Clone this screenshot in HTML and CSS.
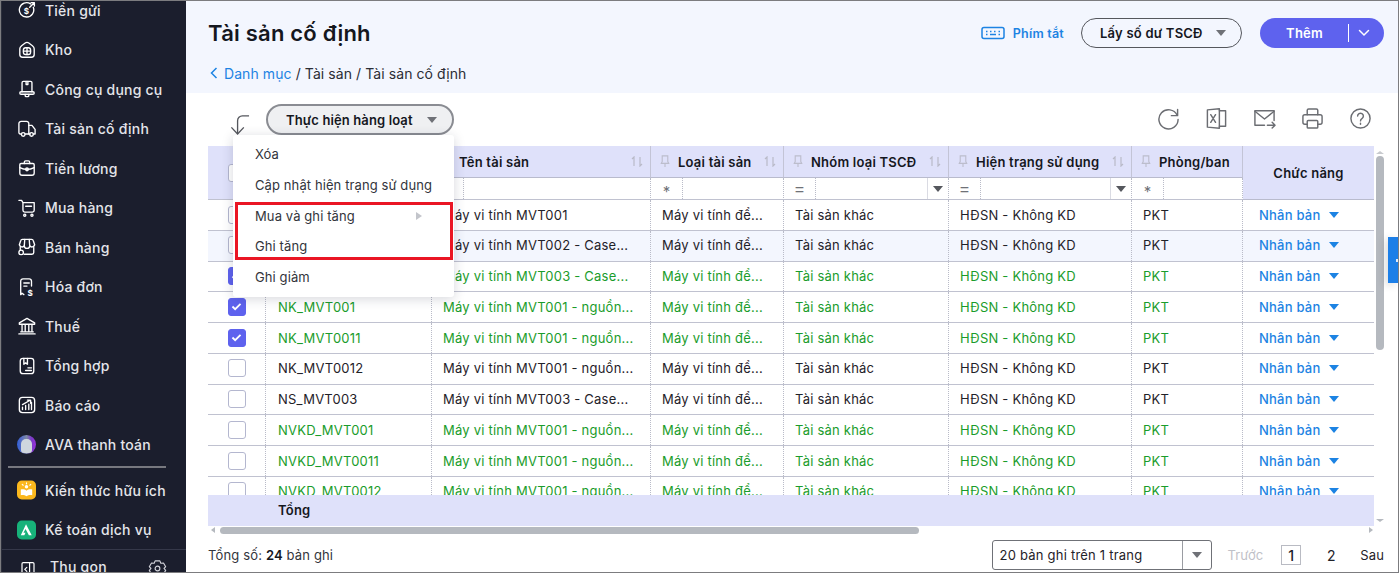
FILE: index.html
```html
<!DOCTYPE html>
<html lang="vi">
<head>
<meta charset="utf-8">
<title>Tài sản cố định</title>
<link rel="stylesheet" href="styles.css">
</head>
<body>
<div class="frame">
<aside class="sidebar">
  <nav class="nav">
    <a class="nav-item"><svg class="ni" viewBox="0 0 20 20"><path d="M14 3.200A8 8 0 1 0 17 7"/><path d="M13 7l5-5M14.500 1.800h3.700v3.700"/><text x="6.500" y="14" class="ni-t">$</text></svg>Tiền gửi</a>
    <a class="nav-item"><svg class="ni" viewBox="0 0 20 20"><path d="M2 8.500C2 7 3 6 4 5.200L8 2.300a3.400 3.400 0 0 1 4 0l4 2.900C17 6 18 7 18 8.500V15a3 3 0 0 1-3 3H5a3 3 0 0 1-3-3z"/><rect x="6" y="7.500" width="8" height="7.500" rx="2.500"/><path d="M6 11.200h8M10 7.500V15"/></svg>Kho</a>
    <a class="nav-item"><svg class="ni" viewBox="0 0 20 20"><path d="M4.500 13V3a1.500 1.500 0 0 1 1.500-1.500h8A1.500 1.500 0 0 1 15.500 3v10"/><rect x="2" y="13" width="16" height="2.800" rx="1.400"/><path d="M8 16v1.500a1 1 0 0 0 1 1h2a1 1 0 0 0 1-1V16M9 1.500v3.500h2V1.500"/></svg>Công cụ dụng cụ</a>
    <a class="nav-item"><svg class="ni" viewBox="0 0 20 20"><path d="M3.500 15.500H2.500A1.500 1.500 0 0 1 1 14V4a2.500 2.500 0 0 1 2.500-2.500h6A2.500 2.500 0 0 1 12 4v11.500H8"/><path d="M12 6h3.500l3.500 4.500v5h-2M12 15.500h1.500"/><circle cx="5.800" cy="16" r="2"/><circle cx="15" cy="16" r="2"/></svg>Tài sản cố định</a>
    <a class="nav-item"><svg class="ni" viewBox="0 0 20 20"><path d="M3.500 5h13A1.500 1.500 0 0 1 18 6.500v9a2.500 2.500 0 0 1-2.500 2.500h-11A2.500 2.500 0 0 1 2 15.500v-9A1.500 1.500 0 0 1 3.500 5z"/><path d="M7 5V3.500A1.500 1.500 0 0 1 8.500 2h3A1.500 1.500 0 0 1 13 3.500V5M2 9.500c5 2.500 11 2.500 16 0"/><circle cx="10" cy="11.500" r="1.500"/></svg>Tiền lương</a>
    <a class="nav-item"><svg class="ni" viewBox="0 0 20 20"><path d="M1 1.500h3l1.500 2.500h12.500v8.500a2 2 0 0 1-2 2H7.500a2 2 0 0 1-2-2V4"/><path d="M8.500 8h6.500"/><circle cx="7.500" cy="18" r="1.200"/><circle cx="15.500" cy="18" r="1.200"/></svg>Mua hàng</a>
    <a class="nav-item"><svg class="ni" viewBox="0 0 20 20"><path d="M5 1.500h10a2 2 0 0 1 2 1.500l1.500 4.500a3 3 0 0 1-5.500 1 3 3 0 0 1-6 0 3 3 0 0 1-5.500-1L3 3a2 2 0 0 1 2-1.500z"/><path d="M7.500 1.500 7 8.500M12.500 1.500 13 8.500M2.500 10.500v2.500M17.500 10.500V16a2 2 0 0 1-2 2H7"/><circle cx="3.500" cy="16" r="2.500"/></svg>Bán hàng</a>
    <a class="nav-item"><svg class="ni" viewBox="0 0 20 20"><path d="M6.500 18.500 4.500 17l-1.500 1.500V3.500a2.500 2.500 0 0 1 2.500-2.500h7a2.500 2.500 0 0 1 2.500 2.500V9"/><path d="M6.500 5.500h6M6.500 9h3.500"/><text x="10.500" y="19.500" class="ni-t">$</text></svg>Hóa đơn</a>
    <a class="nav-item"><svg class="ni" viewBox="0 0 20 20"><path d="M1.500 6.500 10 1.500l8.500 5v1.500h-17zM3 16.500h14M1 18.800h18M4.500 8v8.500M8 8v8.500M12 8v8.500M15.500 8v8.500"/></svg>Thuế</a>
    <a class="nav-item"><svg class="ni" viewBox="0 0 20 20"><rect x="2.500" y="1.500" width="15" height="17" rx="3"/><path d="M6.500 1.500V8l2-1.500 2 1.500V1.500M11 12h4M8.500 15h6.500"/></svg>Tổng hợp</a>
    <a class="nav-item"><svg class="ni" viewBox="0 0 20 20"><rect x="1.500" y="1.500" width="17" height="17" rx="3.500"/><path d="M5 15v-2.500M8.500 15v-4.500M12 15V9M15 15V7M5 9.500l8-4.500M10.500 4.500H14V8"/></svg>Báo cáo</a>
    <a class="nav-item"><span class="ava"><span class="ava-f"></span></span>AVA thanh toán</a>
    <div class="nav-sep"></div>
    <a class="nav-item"><svg class="ni-app" viewBox="0 0 20 20"><rect width="20" height="20" rx="5" class="app-y"/><path class="white" d="M4 9.500c2-.5 4.500 0 6 1.300 1.500-1.300 4-1.800 6-1.300v6c-2-.5-4.500 0-6 1-1.500-1-4-1.500-6-1z"/><circle class="white" cx="10" cy="6.500" r="1.800"/><path class="spark" d="M10 2.500v1M5.500 4l1 1M14.500 4l-1 1"/></svg>Kiến thức hữu ích</a>
    <a class="nav-item"><svg class="ni-app" viewBox="0 0 20 20"><rect width="20" height="20" rx="5" class="app-g"/><path class="white" d="M9.500 4 15.500 15.500h-3L9 9l-2.200 4 2.200 0-1.300 2.500H4z"/></svg>Kế toán dịch vụ</a>
  </nav>
  <div class="side-foot">
    <svg class="ni ni-col" viewBox="0 0 20 20"><rect x="2.500" y="2" width="15" height="17" rx="1.500"/><path d="M12 2v17M8.500 8 6 10.500 8.500 13"/></svg>
    <span class="collapse">Thu gọn</span>
    <svg class="ni ni-gear" viewBox="0 0 20 20"><path d="M7.500 2h5l1 2.500 2.800-.3 2.300 3.900L16.900 10l1.700 2-2.300 3.900-2.800-.3-1 2.400h-5l-1-2.400-2.800.3L1.400 12l1.700-2-1.700-1.900 2.300-3.900 2.800.3z"/><circle cx="10" cy="10" r="2.500"/></svg>
  </div>
</aside>
<main class="main">
  <header class="top">
    <div class="top-row">
      <h1 class="title">Tài sản cố định</h1>
      <div class="top-actions">
        <a class="shortcut"><svg class="kbd" viewBox="0 0 24 14"><rect x="1" y="1.500" width="22" height="11" rx="2"/><path d="M5 5.500h1.500M9 5.500h1.500M13 5.500h1.500M17.500 5.500H19M5 8.500h1.500M9 8.500h6M17.500 8.500H19"/></svg>Phím tắt</a>
        <button class="btn-outline">Lấy số dư TSCĐ<span class="caret gray"></span></button>
        <button class="btn-primary"><span class="bp-label">Thêm</span><span class="bp-split"><svg class="chev" viewBox="0 0 12 8"><path d="M1.500 1.500 6 6l4.500-4.500"/></svg></span></button>
      </div>
    </div>
    <div class="crumbs"><svg class="crumb-chev" viewBox="0 0 8 12"><path d="M6.500 1 1.500 6l5 5"/></svg><a class="crumb-link">Danh mục</a> / Tài sản / Tài sản cố định</div>
  </header>
  <section class="content">
    <div class="toolbar">
      <svg class="bulk-arrow" viewBox="0 0 22 22"><path d="M21 1.500h-7a5 5 0 0 0-5 5V20"/><path d="M2.500 13.500 9 20.500l6.500-7"/></svg>
      <button class="btn-bulk">Thực hiện hàng loạt<span class="caret gray"></span></button>
      <div class="tools">
        <svg class="tool" viewBox="0 0 24 24"><path d="M21 8.500A10 10 0 1 0 22 13"/><path d="M21.500 2.500V9H15"/></svg>
        <svg class="tool" viewBox="0 0 24 24"><path d="M2.500 3 15 1.800v20.400L2.500 21z"/><path d="M15 4h6.500v16H15M6 8l5 8M11 8l-5 8"/></svg>
        <svg class="tool" viewBox="0 0 24 24"><path d="M12 19H2V4h20v10"/><path d="M2 4.500l10 8 10-8M15 19h8M20 16l3 3-3 3"/></svg>
        <svg class="tool" viewBox="0 0 24 24"><path d="M6.500 8V3.500a1.500 1.500 0 0 1 1.500-1.500h8a1.500 1.500 0 0 1 1.500 1.500V8"/><path d="M6.500 18H4a2 2 0 0 1-2-2v-6a2 2 0 0 1 2-2h16a2 2 0 0 1 2 2v6a2 2 0 0 1-2 2h-2.500"/><rect x="6.500" y="14" width="11" height="8" rx="1"/></svg>
        <svg class="tool" viewBox="0 0 24 24"><circle cx="12" cy="12" r="10"/><path d="M9 9.500a3 3 0 1 1 4.500 2.600c-1 .6-1.500 1.200-1.500 2.400M12 17v1"/></svg>
      </div>
    </div>
    <div class="grid-wrap">
      <div class="grid">
        <div class="head">
          <div class="h-chk"><span class="cb"></span></div>
          <div class="h-cell"></div>
          <div class="h-cell"><svg class="pin" viewBox="0 0 10 14"><path d="M2 1h6v6l1 2H1l1-2zM5 9v4"/></svg><span class="h-txt">Tên tài sản</span><svg class="sort" viewBox="0 0 12 11"><path d="M3 10V1L1 3M9 1v9l2-2"/></svg></div>
          <div class="h-cell"><svg class="pin" viewBox="0 0 10 14"><path d="M2 1h6v6l1 2H1l1-2zM5 9v4"/></svg><span class="h-txt">Loại tài sản</span><svg class="sort" viewBox="0 0 12 11"><path d="M3 10V1L1 3M9 1v9l2-2"/></svg></div>
          <div class="h-cell"><svg class="pin" viewBox="0 0 10 14"><path d="M2 1h6v6l1 2H1l1-2zM5 9v4"/></svg><span class="h-txt">Nhóm loại TSCĐ</span><svg class="sort" viewBox="0 0 12 11"><path d="M3 10V1L1 3M9 1v9l2-2"/></svg></div>
          <div class="h-cell"><svg class="pin" viewBox="0 0 10 14"><path d="M2 1h6v6l1 2H1l1-2zM5 9v4"/></svg><span class="h-txt">Hiện trạng sử dụng</span><svg class="sort" viewBox="0 0 12 11"><path d="M3 10V1L1 3M9 1v9l2-2"/></svg></div>
          <div class="h-cell"><svg class="pin" viewBox="0 0 10 14"><path d="M2 1h6v6l1 2H1l1-2zM5 9v4"/></svg><span class="h-txt">Phòng/ban</span></div>
          <div class="h-func">Chức năng</div>
          <div class="f-cell"></div>
          <div class="f-cell"><span class="f-op"></span><span class="f-val"></span></div>
          <div class="f-cell"><span class="f-op">*</span><span class="f-val"></span></div>
          <div class="f-cell"><span class="f-op eq">=</span><span class="f-val"></span><span class="f-dd"><span class="caret dark"></span></span></div>
          <div class="f-cell"><span class="f-op eq">=</span><span class="f-val"></span><span class="f-dd"><span class="caret dark"></span></span></div>
          <div class="f-cell"><span class="f-op">*</span><span class="f-val"></span></div>
        </div>
        <div class="body">
          <div class="row"><div class="c c-chk"><span class="cb"></span></div><div class="c c-code"></div><div class="c">Máy vi tính MVT001</div><div class="c">Máy vi tính để...</div><div class="c">Tài sản khác</div><div class="c">HĐSN - Không KD</div><div class="c">PKT</div><div class="c c-act"><a class="act">Nhân bản</a><span class="caret blue"></span></div></div>
          <div class="row alt"><div class="c c-chk"><span class="cb"></span></div><div class="c c-code"></div><div class="c">Máy vi tính MVT002 - Case...</div><div class="c">Máy vi tính để...</div><div class="c">Tài sản khác</div><div class="c">HĐSN - Không KD</div><div class="c">PKT</div><div class="c c-act"><a class="act">Nhân bản</a><span class="caret blue"></span></div></div>
          <div class="row green"><div class="c c-chk"><span class="cb on"><svg viewBox="0 0 12 10"><path d="M1.500 5 4.500 8l6-6"/></svg></span></div><div class="c c-code"></div><div class="c">Máy vi tính MVT003 - Case...</div><div class="c">Máy vi tính để...</div><div class="c">Tài sản khác</div><div class="c">HĐSN - Không KD</div><div class="c">PKT</div><div class="c c-act"><a class="act">Nhân bản</a><span class="caret blue"></span></div></div>
          <div class="row green"><div class="c c-chk"><span class="cb on"><svg viewBox="0 0 12 10"><path d="M1.500 5 4.500 8l6-6"/></svg></span></div><div class="c c-code">NK_MVT001</div><div class="c">Máy vi tính MVT001 - nguồn...</div><div class="c">Máy vi tính để...</div><div class="c">Tài sản khác</div><div class="c">HĐSN - Không KD</div><div class="c">PKT</div><div class="c c-act"><a class="act">Nhân bản</a><span class="caret blue"></span></div></div>
          <div class="row green"><div class="c c-chk"><span class="cb on"><svg viewBox="0 0 12 10"><path d="M1.500 5 4.500 8l6-6"/></svg></span></div><div class="c c-code">NK_MVT0011</div><div class="c">Máy vi tính MVT001 - nguồn...</div><div class="c">Máy vi tính để...</div><div class="c">Tài sản khác</div><div class="c">HĐSN - Không KD</div><div class="c">PKT</div><div class="c c-act"><a class="act">Nhân bản</a><span class="caret blue"></span></div></div>
          <div class="row"><div class="c c-chk"><span class="cb"></span></div><div class="c c-code">NK_MVT0012</div><div class="c">Máy vi tính MVT001 - nguồn...</div><div class="c">Máy vi tính để...</div><div class="c">Tài sản khác</div><div class="c">HĐSN - Không KD</div><div class="c">PKT</div><div class="c c-act"><a class="act">Nhân bản</a><span class="caret blue"></span></div></div>
          <div class="row"><div class="c c-chk"><span class="cb"></span></div><div class="c c-code">NS_MVT003</div><div class="c">Máy vi tính MVT003 - Case...</div><div class="c">Máy vi tính để...</div><div class="c">Tài sản khác</div><div class="c">HĐSN - Không KD</div><div class="c">PKT</div><div class="c c-act"><a class="act">Nhân bản</a><span class="caret blue"></span></div></div>
          <div class="row green"><div class="c c-chk"><span class="cb"></span></div><div class="c c-code">NVKD_MVT001</div><div class="c">Máy vi tính MVT001 - nguồn...</div><div class="c">Máy vi tính để...</div><div class="c">Tài sản khác</div><div class="c">HĐSN - Không KD</div><div class="c">PKT</div><div class="c c-act"><a class="act">Nhân bản</a><span class="caret blue"></span></div></div>
          <div class="row green"><div class="c c-chk"><span class="cb"></span></div><div class="c c-code">NVKD_MVT0011</div><div class="c">Máy vi tính MVT001 - nguồn...</div><div class="c">Máy vi tính để...</div><div class="c">Tài sản khác</div><div class="c">HĐSN - Không KD</div><div class="c">PKT</div><div class="c c-act"><a class="act">Nhân bản</a><span class="caret blue"></span></div></div>
          <div class="row green"><div class="c c-chk"><span class="cb"></span></div><div class="c c-code">NVKD_MVT0012</div><div class="c">Máy vi tính MVT001 - nguồn...</div><div class="c">Máy vi tính để...</div><div class="c">Tài sản khác</div><div class="c">HĐSN - Không KD</div><div class="c">PKT</div><div class="c c-act"><a class="act">Nhân bản</a><span class="caret blue"></span></div></div>
        </div>
        <div class="total"><div></div><div class="total-l">Tổng</div></div>
        <div class="hbar"><span class="hb-l"></span><span class="hb-thumb"></span><span class="hb-r"></span></div>
      </div>
      <div class="vbar"><span class="vb-up"></span><span class="vb-thumb"></span><span class="vb-down"></span></div>
    </div>
    <div class="footer">
      <div class="count">Tổng số: <b>24</b> bản ghi</div>
      <div class="pager">
        <div class="per"><span class="per-t">20 bản ghi trên 1 trang</span><span class="per-dd"><span class="caret gray"></span></span></div>
        <span class="pg off">Trước</span>
        <span class="pg-n cur">1</span>
        <span class="pg-n">2</span>
        <span class="pg">Sau</span>
      </div>
    </div>
    <div class="menu">
      <div class="m-item">Xóa</div>
      <div class="m-item">Cập nhật hiện trạng sử dụng</div>
      <div class="m-item">Mua và ghi tăng<span class="m-arrow"></span></div>
      <div class="m-item">Ghi tăng</div>
      <div class="m-item">Ghi giảm</div>
    </div>
    <div class="red-frame"></div>
    <div class="side-tab"><span class="tab-tick"></span></div>
  </section>
</main>
</div>
</body>
</html>
```
FILE: styles.css
```css
* { box-sizing: border-box; }
html, body { margin: 0; height: 100%; overflow: hidden; background: #fff; }
body { font-family: Inter, "Liberation Sans", sans-serif; font-size: 13px; letter-spacing: .22px; color: #1f2229; }
a { text-decoration: none; }
button { font-family: inherit; letter-spacing: inherit; cursor: pointer; }
.frame { display: flex; width: 1399px; height: 573px; border: 1px solid #7c7c7f; overflow: hidden; position: relative; }

.sidebar { width: 185px; flex: none; background: #1b1e2d; border-left: 1px solid #2c2f3c; display: flex; flex-direction: column; overflow: hidden; height: 571px; }
.nav { flex: none; height: 560px; margin-top: -12px; padding-top: 1.3px; }
.nav-item { display: flex; align-items: center; gap: 9px; height: 39.5px; padding-left: 16px; color: #e4e5ea; font-size: 14px; font-weight: 500; white-space: nowrap; }
.ni { width: 18px; height: 18px; flex: none; fill: none; stroke: #fff; stroke-width: 1.5; stroke-linecap: round; stroke-linejoin: round; }
.ni-t { fill: #fff; stroke: none; font-size: 9px; font-weight: 700; font-family: Inter, sans-serif; }
.ni-app { width: 19px; height: 20px; flex: none; margin-left: -1px; }
.app-y { fill: #fbb81d; }
.app-g { fill: #17b27a; }
.white { fill: #fff; }
.spark { fill: none; stroke: #fff; stroke-width: 1.2; stroke-linecap: round; }
.ava { width: 19px; height: 19px; margin-left: -1px; border-radius: 50%; background: linear-gradient(90deg, #2f5fd8 0, #5a6fc4 25%, #7d8aa5 50%, #7a3cc8 75%, #9a30dc 100%); display: flex; align-items: center; justify-content: center; flex: none; }
.ava-f { width: 11px; height: 14px; margin-top: 3px; border-radius: 5px 5px 3px 3px; background: #cfd6de; }
.nav-sep { height: 2px; background: #77787f; margin: 2px 20px 2px 6px; }
.side-foot { flex: 1; border-top: 1px solid #353849; display: flex; align-items: flex-start; padding: 10px 0 0 18px; }
.ni-col { width: 16px; height: 18px; margin-right: 14px; }
.collapse { color: #e4e5ea; font-size: 14px; font-weight: 500; line-height: 20px; margin-top: -3px; }
.ni-gear { width: 19px; height: 19px; margin-left: auto; margin-right: 19px; margin-top: -1px; stroke: #d2d3da; stroke-width: 1.2; }

.main { flex: 1; min-width: 0; display: flex; flex-direction: column; position: relative; }
.top { height: 92px; background: #f3f6fe; padding: 0 0 0 22px; flex: none; }
.top-row { display: flex; align-items: center; justify-content: space-between; height: 64px; }
.title { margin: 0; font-size: 22px; font-weight: 600; color: #15171e; }
.top-actions { display: flex; align-items: center; padding-right: 14px; }
.shortcut { display: flex; align-items: center; gap: 8px; color: #1c83e3; font-size: 12.5px; font-weight: 600; margin-right: 17px; }
.kbd { width: 24px; height: 14px; fill: none; stroke: #1c83e3; stroke-width: 1.5; }
.btn-outline { width: 161px; height: 30px; border: 1px solid #55575d; border-radius: 15px; background: transparent; font-size: 13px; font-weight: 600; color: #15171e; display: flex; align-items: center; justify-content: space-between; padding: 0 15px 0 18px; margin-right: 18px; }
.btn-primary { width: 124px; height: 30px; border: 0; border-radius: 15px; background: #5e62ee; color: #fff; font-size: 13px; font-weight: 600; display: flex; align-items: center; padding: 0; }
.bp-label { flex: 1; text-align: center; padding-left: 1px; }
.bp-split { width: 36px; height: 18px; border-left: 1px solid #fff; display: flex; align-items: center; justify-content: center; padding-right: 6px; }
.chev { width: 12px; height: 8px; fill: none; stroke: #fff; stroke-width: 1.5; stroke-linecap: round; }
.crumbs { display: flex; align-items: center; font-size: 14px; letter-spacing: .08px; color: #2b2d35; white-space: pre; height: 20px; margin-top: -2px; padding-left: 2px; }
.crumb-chev { width: 8px; height: 12px; fill: none; stroke: #1c83e3; stroke-width: 1.5; margin-right: 6px; }
.crumb-link { color: #1c83e3; }

.content { flex: 1; padding: 0 0 0 22px; display: flex; flex-direction: column; min-height: 0; position: relative; }
.toolbar { height: 53px; display: flex; align-items: center; flex: none; }
.bulk-arrow { width: 21px; height: 22px; margin: 11px 16px 0 21px; fill: none; stroke: #55575d; stroke-width: 1.4; flex: none; }
.btn-bulk { width: 188px; height: 31px; border: 2px solid #8a8c92; border-radius: 16px; background: #eff0f2; font-size: 13px; font-weight: 600; letter-spacing: .12px; color: #15171e; display: flex; align-items: center; justify-content: space-between; padding: 0 15px 0 18px; }
.tools { margin-left: auto; display: flex; gap: 25px; padding-right: 26px; margin-top: -2px; }
.tool { width: 23px; height: 23px; fill: none; stroke: #6b6d72; stroke-width: 1.5; stroke-linecap: round; stroke-linejoin: round; }
.caret { display: inline-block; width: 0; height: 0; border-left: 5px solid transparent; border-right: 5px solid transparent; border-top: 6px solid; flex: none; }
.caret.gray { border-top-color: #6f7177; }
.caret.dark { border-top-color: #55575d; }
.caret.blue { border-top-color: #1c83e3; }

.grid-wrap { display: flex; flex: none; height: 399px; }
.grid { width: 1166px; flex: none; display: flex; flex-direction: column; position: relative; }
.head { display: grid; grid-template-columns: 58px 166px 219px 133px 165px 183px 111px 131px; grid-template-rows: 32px 22px; height: 54px; flex: none; }
.h-chk { grid-row: 1 / span 2; background: #dfe1fa; border-right: 1px solid #c3c4d6; border-bottom: 1px solid #c0c2d0; display: flex; align-items: center; justify-content: center; }
.h-cell { background: #dfe1fa; border-right: 1px solid #c3c4d6; border-bottom: 1px solid #b9bbcd; display: flex; align-items: center; padding: 0 7px 0 9px; min-width: 0; }
.h-txt { font-size: 13px; font-weight: 600; color: #15171e; white-space: nowrap; flex: 1; }
.pin { width: 10px; height: 13px; fill: none; stroke: #bcbdcc; stroke-width: 1.2; flex: none; margin-right: 8px; }
.sort { width: 12px; height: 11px; fill: none; stroke: #b9bac8; stroke-width: 1.2; flex: none; }
.h-func { grid-column: 8; grid-row: 1 / span 2; background: #dfe1fa; border-bottom: 1px solid #b9bbcd; display: flex; align-items: center; justify-content: center; font-size: 13px; font-weight: 600; color: #15171e; }
.f-cell { background: #fff; border-right: 1px dotted #b9bbc8; border-bottom: 1px solid #c0c2d0; display: flex; align-items: stretch; min-width: 0; }
.f-op { width: 32px; flex: none; border-right: 1px dotted #b9bbc8; display: flex; align-items: center; justify-content: center; color: #6f7177; font-size: 15px; padding-top: 5px; }
.f-op.eq { font-size: 19px; font-weight: 300; padding-top: 0; }
.f-val { flex: 1; }
.f-dd { width: 21px; flex: none; border-left: 1px solid #dadbe3; display: flex; align-items: center; justify-content: center; }

.body { height: 295px; overflow: hidden; flex: none; }
.row { display: grid; grid-template-columns: 58px 166px 219px 133px 165px 183px 111px 131px; height: 30.75px; border-bottom: 1px solid #c0c2d0; background: #fff; font-size: 13px; }
.row.alt { background: #f3f6fe; }
.row.green { color: #1a9c2b; }
.c { border-right: 1px dotted #b9bbc8; display: flex; align-items: center; padding-left: 11px; padding-bottom: .5px; white-space: pre; min-width: 0; overflow: hidden; }
.c-code { padding-left: 12px; }
.c-chk { justify-content: center; padding-left: 0; }
.c-act { border-right: 0; padding-left: 16px; gap: 9px; }
.act { color: #1c83e3; font-weight: 500; }
.cb { width: 18px; height: 18px; border: 1px solid #b4b7cf; border-radius: 3px; background: #fff; display: flex; align-items: center; justify-content: center; flex: none; }
.cb.on { background: #5e62ee; border-color: #5e62ee; }
.cb.on svg { width: 11px; height: 9px; fill: none; stroke: #fff; stroke-width: 2; }

.total { height: 31px; background: #dfe1fa; display: grid; grid-template-columns: 58px 1fr; align-items: center; flex: none; }
.total-l { font-size: 13px; font-weight: 600; padding-left: 12px; padding-bottom: 1px; color: #15171e; }
.hbar { height: 8px; display: flex; align-items: center; gap: 5px; padding: 0 3px; flex: none; position: relative; }
.hb-l { width: 0; height: 0; border-right: 4px solid #b5b9bf; border-top: 3px solid transparent; border-bottom: 3px solid transparent; }
.hb-thumb { width: 699px; height: 7px; background: #b5b9bf; border-radius: 4px; }
.hb-r { position: absolute; right: 1px; top: 1px; width: 0; height: 0; border-left: 4px solid #b5b9bf; border-top: 3px solid transparent; border-bottom: 3px solid transparent; }
.vbar { width: 8px; margin-left: 2px; display: flex; flex-direction: column; align-items: center; height: 376px; padding-top: 5px; }
.vb-up { width: 0; height: 0; border-bottom: 3px solid #c8cace; border-left: 4px solid transparent; border-right: 4px solid transparent; }
.vb-thumb { width: 8px; height: 194px; margin-top: 2px; background: #b5b9bf; border-radius: 4px; }
.vb-down { width: 0; height: 0; margin-top: auto; border-top: 3px solid #b5b9bf; border-left: 4px solid transparent; border-right: 4px solid transparent; }

.footer { flex: 1; display: flex; align-items: flex-start; justify-content: space-between; padding: 0 14px 0 0; min-height: 0; }
.count { font-size: 13px; letter-spacing: .15px; color: #33353c; line-height: 20px; }
.count b { font-weight: 600; color: #15171e; }
.pager { display: flex; align-items: center; margin-top: -5px; }
.per { width: 220px; height: 30px; border: 1px solid #6f7177; border-radius: 3px; display: flex; align-items: center; font-size: 13px; margin-right: 16px; color: #1f2229; }
.per-t { flex: 1; padding-left: 7px; }
.per-dd { width: 29px; height: 100%; border-left: 1px solid #9a9ca2; display: flex; align-items: center; justify-content: center; }
.pg { font-size: 13px; letter-spacing: .1px; }
.pg.off { color: #bfc1c8; }
.pg-n { width: 20px; height: 20px; display: flex; align-items: center; justify-content: center; font-size: 14px; margin-left: 18px; }
.pg-n.cur { border: 1px solid #b9bbc3; font-weight: 500; }
.pg-n + .pg-n { margin-left: 20px; margin-right: 19px; }

.menu { position: absolute; left: 47px; top: 42px; width: 221px; height: 162px; background: #fff; border-radius: 3px; box-shadow: 0 2px 12px rgba(30, 35, 60, .18); padding: 4px 0; display: flex; flex-direction: column; }
.m-item { height: 30.75px; flex: none; display: flex; align-items: center; padding-left: 22px; padding-bottom: .5px; font-size: 13px; letter-spacing: .1px; color: #33353c; position: relative; }
.m-arrow { position: absolute; left: 183px; width: 0; height: 0; border-left: 6px solid #c3c5cb; border-top: 4px solid transparent; border-bottom: 4px solid transparent; }
.red-frame { position: absolute; left: 49px; top: 109px; width: 218px; height: 58px; border: 3px solid #ea1624; }
.side-tab { position: absolute; right: 0; top: 144px; width: 10px; height: 46px; background: #1c7fe8; box-shadow: -3px 2px 8px rgba(0, 0, 0, .14); display: flex; align-items: center; justify-content: flex-end; }
.tab-tick { width: 2px; height: 3px; background: #dfe9f7; }
```
